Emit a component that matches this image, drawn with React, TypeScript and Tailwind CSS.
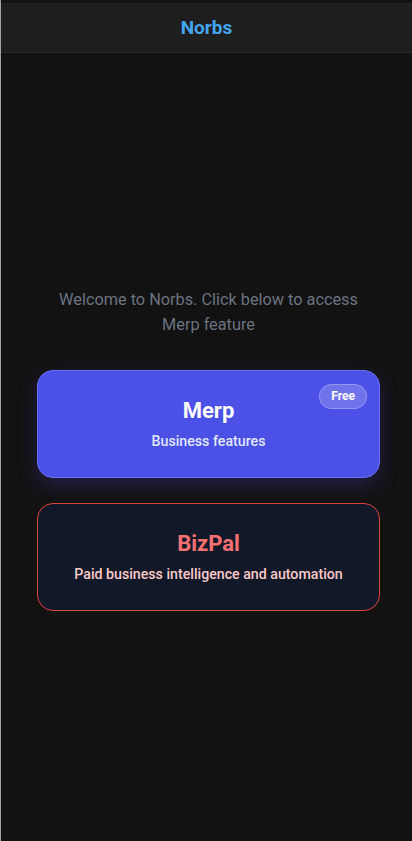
export default function App() {
  return (
    <div className="flex min-h-[841px] flex-col border-l border-[#a3a3a3] bg-[#121212] pt-[3px] font-['Roboto','Noto_Sans',sans-serif]">
      <header className="flex h-[50px] items-center justify-center border-b border-[#2a2a2a] bg-[#1e1e1e]">
        <h1 className="mt-[1px] text-[19px] font-bold text-[#42a5f5]">Norbs</h1>
      </header>

      <main className="flex flex-1 flex-col justify-center pl-[36px] pr-[32px] pt-[3px]">
        <p className="mx-auto mb-[33px] max-w-[320px] text-center text-[16.3px] leading-[25px] text-[#6b7280]">
          Welcome to Norbs. Click below to access Merp feature
        </p>

        <div className="grid gap-[25px]">
          <button className="relative flex h-[108px] flex-col items-center justify-center rounded-2xl border border-[#6c6ff5] bg-[#4b50e6] shadow-[0_8px_20px_rgba(79,70,229,0.25)]">
            <span className="absolute right-[12px] top-[13px] flex h-[25px] items-center rounded-full border border-white/25 bg-white/20 px-[11px] text-xs font-bold text-white">
              Free
            </span>
            <span className="mt-[2px] text-[22px] font-bold leading-7 text-white">Merp</span>
            <span className="mt-[6px] text-[14.2px] font-medium text-[#e0e7ff]">Business features</span>
          </button>

          <button className="flex h-[108px] flex-col items-center justify-center rounded-2xl border border-[#d9473d] bg-[#111827]">
            <span className="mt-[2px] text-[22px] font-bold leading-7 text-[#f87171]">BizPal</span>
            <span className="mt-[6px] text-[14.2px] font-medium text-[#fecaca]">Paid business intelligence and automation</span>
          </button>
        </div>
      </main>
    </div>
  );
}
